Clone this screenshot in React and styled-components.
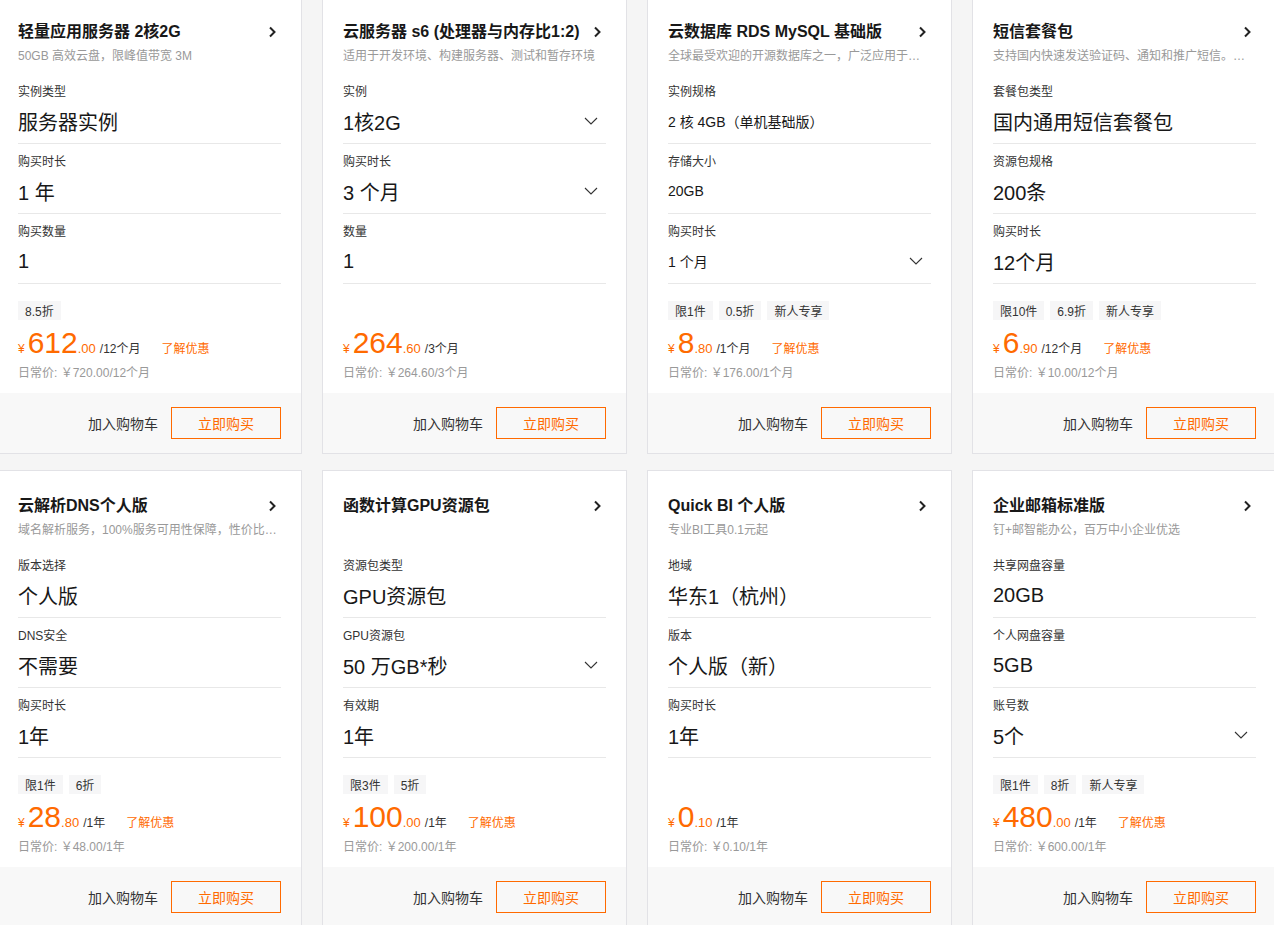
import React from "react";
import styled, { createGlobalStyle } from "styled-components";

const GlobalStyle = createGlobalStyle`
  html, body {
    margin: 0;
    padding: 0;
    background: #f5f5f5;
    overflow: hidden;
  }
  body {
    font-family: "Liberation Sans", Arial, "Noto Sans CJK SC", sans-serif;
    color: #333;
  }
`;

const Grid = styled.div`
  display: grid;
  grid-template-columns: repeat(4, 305px);
  column-gap: 20px;
  row-gap: 16px;
  width: 1280px;
  margin: -4px 0 0 -3px;
`;

const Card = styled.div`
  box-sizing: border-box;
  height: 458px;
  background: #fff;
  border: 1px solid #e2e2e6;
  display: flex;
  flex-direction: column;
`;

const Body = styled.div`
  flex: 1;
  padding: 23px 20px 0;
  min-width: 0;
`;

const TitleRow = styled.div`
  display: flex;
  align-items: center;
  justify-content: space-between;
  height: 24px;
`;

const Title = styled.div`
  font-size: 16px;
  font-weight: bold;
  color: #181818;
  line-height: 24px;
  white-space: nowrap;
`;

const Sub = styled.div`
  margin: 4px 0 10px;
  height: 16px;
  line-height: 16px;
  font-size: 12px;
  color: #999;
  white-space: nowrap;
  overflow: hidden;
  text-overflow: ellipsis;
`;

const Field = styled.div`
  padding: 10px 0 8px;
  border-bottom: 1px solid #e8e8e8;
`;

const Label = styled.div`
  font-size: 12px;
  line-height: 16px;
  color: #333;
`;

const Value = styled.div`
  margin-top: 7px;
  height: 28px;
  display: flex;
  align-items: center;
  justify-content: space-between;
  font-size: ${(p) => (p.small ? "14px" : "20px")};
  color: #181818;
  white-space: nowrap;
`;

const Tags = styled.div`
  margin-top: 17px;
  height: 19px;
  display: flex;
  gap: 6px;
`;

const Tag = styled.span`
  display: inline-flex;
  align-items: center;
  height: 19px;
  padding: 0 7px;
  background: #f6f6f7;
  font-size: 12px;
  color: #333;
`;

const PriceRow = styled.div`
  margin-top: 7px;
  height: 32px;
  display: flex;
  align-items: baseline;
  color: #ff6a00;
  white-space: nowrap;
`;

const Yen = styled.span`
  font-size: 12px;
  margin-right: 3px;
`;

const Big = styled.span`
  font-size: 30px;
  line-height: 32px;
`;

const Dec = styled.span`
  font-size: 13px;
`;

const Unit = styled.span`
  font-size: 12px;
  color: #333;
  margin-left: 4px;
`;

const Promo = styled.span`
  font-size: 12px;
  color: #ff6a00;
  margin-left: 21px;
`;

const Regular = styled.div`
  margin-top: 6px;
  font-size: 12px;
  line-height: 16px;
  color: #999;
`;

const Footer = styled.div`
  height: 60px;
  background: #f8f8f8;
  display: flex;
  align-items: center;
  justify-content: flex-end;
  padding: 0 20px;
`;

const CartLink = styled.span`
  font-size: 14px;
  color: #333;
  margin-right: 13px;
`;

const BuyButton = styled.button`
  box-sizing: border-box;
  width: 110px;
  height: 32px;
  border: 1px solid #ff6a00;
  background: transparent;
  color: #ff6a00;
  font-size: 14px;
  font-family: inherit;
  padding: 0;
`;

const Arrow = () => (
  <svg width="8" height="12" viewBox="0 0 8 12" style={{ marginRight: 5 }}>
    <path d="M2 1.5l4.5 4.5L2 10.5" fill="none" stroke="#222" strokeWidth="2" />
  </svg>
);

const Caret = () => (
  <svg width="14" height="8" viewBox="0 0 14 8" style={{ marginRight: 8 }}>
    <path d="M1 1l6 6 6-6" fill="none" stroke="#333" strokeWidth="1.1" />
  </svg>
);

const products = [
  {
    title: "轻量应用服务器 2核2G",
    sub: "50GB 高效云盘，限峰值带宽 3M",
    fields: [["实例类型", "服务器实例"], ["购买时长", "1 年"], ["购买数量", "1"]],
    tags: ["8.5折"],
    price: "612", dec: ".00", unit: "/12个月", promo: true,
    regular: "￥720.00/12个月",
  },
  {
    title: "云服务器 s6 (处理器与内存比1:2)",
    sub: "适用于开发环境、构建服务器、测试和暂存环境",
    fields: [["实例", "1核2G", true], ["购买时长", "3 个月", true], ["数量", "1"]],
    tags: [],
    price: "264", dec: ".60", unit: "/3个月", promo: false,
    regular: "￥264.60/3个月",
  },
  {
    title: "云数据库 RDS MySQL 基础版",
    sub: "全球最受欢迎的开源数据库之一，广泛应用于互联网、电商、金融等领域",
    small: true,
    fields: [["实例规格", "2 核 4GB（单机基础版）"], ["存储大小", "20GB"], ["购买时长", "1 个月", true]],
    tags: ["限1件", "0.5折", "新人专享"],
    price: "8", dec: ".80", unit: "/1个月", promo: true,
    regular: "￥176.00/1个月",
  },
  {
    title: "短信套餐包",
    sub: "支持国内快速发送验证码、通知和推广短信。秒级触达",
    fields: [["套餐包类型", "国内通用短信套餐包"], ["资源包规格", "200条"], ["购买时长", "12个月"]],
    tags: ["限10件", "6.9折", "新人专享"],
    price: "6", dec: ".90", unit: "/12个月", promo: true,
    regular: "￥10.00/12个月",
  },
  {
    title: "云解析DNS个人版",
    sub: "域名解析服务，100%服务可用性保障，性价比高的个人版",
    fields: [["版本选择", "个人版"], ["DNS安全", "不需要"], ["购买时长", "1年"]],
    tags: ["限1件", "6折"],
    price: "28", dec: ".80", unit: "/1年", promo: true,
    regular: "￥48.00/1年",
  },
  {
    title: "函数计算GPU资源包",
    sub: "",
    fields: [["资源包类型", "GPU资源包"], ["GPU资源包", "50 万GB*秒", true], ["有效期", "1年"]],
    tags: ["限3件", "5折"],
    price: "100", dec: ".00", unit: "/1年", promo: true,
    regular: "￥200.00/1年",
  },
  {
    title: "Quick BI 个人版",
    sub: "专业BI工具0.1元起",
    fields: [["地域", "华东1（杭州）"], ["版本", "个人版（新）"], ["购买时长", "1年"]],
    tags: [],
    price: "0", dec: ".10", unit: "/1年", promo: false,
    regular: "￥0.10/1年",
  },
  {
    title: "企业邮箱标准版",
    sub: "钉+邮智能办公，百万中小企业优选",
    fields: [["共享网盘容量", "20GB"], ["个人网盘容量", "5GB"], ["账号数", "5个", true]],
    tags: ["限1件", "8折", "新人专享"],
    price: "480", dec: ".00", unit: "/1年", promo: true,
    regular: "￥600.00/1年",
  },
];

const ProductCard = ({ p }) => (
  <Card>
    <Body>
      <TitleRow>
        <Title>{p.title}</Title>
        <Arrow />
      </TitleRow>
      <Sub>{p.sub}</Sub>
      {p.fields.map(([label, value, select]) => (
        <Field key={label}>
          <Label>{label}</Label>
          <Value small={p.small}>
            <span>{value}</span>
            {select && <Caret />}
          </Value>
        </Field>
      ))}
      <Tags>
        {p.tags.map((t) => (
          <Tag key={t}>{t}</Tag>
        ))}
      </Tags>
      <PriceRow>
        <Yen>¥</Yen>
        <Big>{p.price}</Big>
        <Dec>{p.dec}</Dec>
        <Unit>{p.unit}</Unit>
        {p.promo && <Promo>了解优惠</Promo>}
      </PriceRow>
      <Regular>日常价: {p.regular}</Regular>
    </Body>
    <Footer>
      <CartLink>加入购物车</CartLink>
      <BuyButton>立即购买</BuyButton>
    </Footer>
  </Card>
);

export default function App() {
  return (
    <>
      <GlobalStyle />
      <Grid>
        {products.map((p) => (
          <ProductCard key={p.title} p={p} />
        ))}
      </Grid>
    </>
  );
}
